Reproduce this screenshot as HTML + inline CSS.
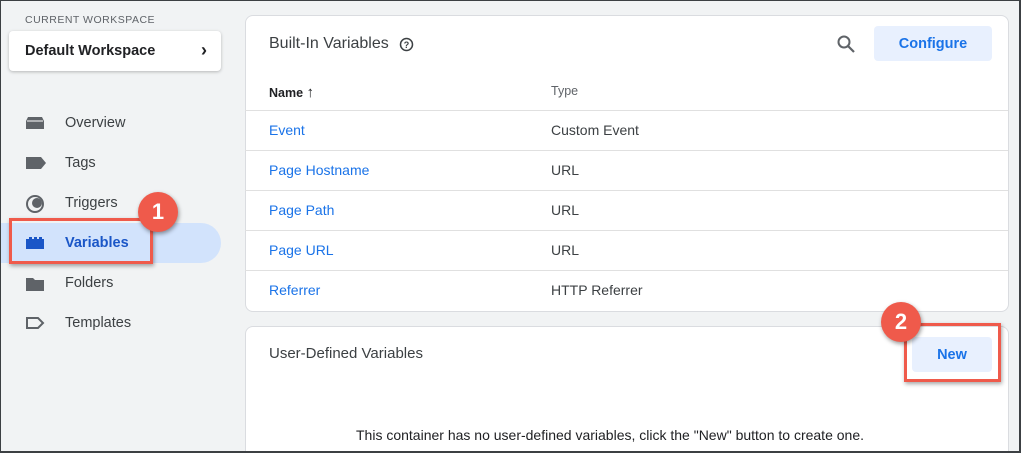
<!DOCTYPE html>
<html style="width:1021px;height:453px;overflow:hidden"><head><meta charset="utf-8"><style>
*{box-sizing:border-box;margin:0;padding:0}
body{width:1021px;height:453px;overflow:hidden;background:#f1f3f4;font-family:"Liberation Sans",Arial,sans-serif;position:relative;color:#202124}
.frame{position:absolute;left:0;top:0;width:1021px;height:453px;border:1px solid #3c4043;border-right-width:2px;border-bottom-width:2px;pointer-events:none;z-index:20}
.abs{position:absolute}
.ws{left:9px;top:31px;width:212px;height:40px;background:#fff;border-radius:4px;box-shadow:0 1px 3px rgba(0,0,0,.25);font-size:14.5px;font-weight:bold;padding:12px 16px}
.nav{left:65px;font-size:14.5px;color:#3c4043}
.card{background:#fff;border:1px solid #dadce0;border-radius:8px}
.row{position:absolute;left:245px;width:763px;height:40px;border-top:1px solid #e0e0e0;font-size:14px}
.row .n{position:absolute;left:24px;top:11px;color:#1a73e8}
.row .t{position:absolute;left:306px;top:11px;color:#3c4043}
.btn{background:#e8f0fe;color:#1a73e8;border-radius:4px;font-size:14.5px;font-weight:bold;text-align:center}
.badge{width:40px;height:40px;border-radius:50%;background:#ef5a4b;color:#fff;font-size:22px;font-weight:bold;text-align:center;line-height:40px;box-shadow:1px 2px 4px rgba(0,0,0,.4);z-index:10}
.red{border:3px solid #ef5a4b;box-shadow:1px 2px 4px rgba(0,0,0,.35);z-index:9}
</style></head><body>
<div class="abs" style="left:25px;top:14px;font-size:10.5px;letter-spacing:.5px;color:#5f6368">CURRENT WORKSPACE</div>
<div class="abs ws">Default Workspace<span style="position:absolute;right:14px;top:9px;font-size:18px">›</span></div>

<svg class="abs" style="left:25px;top:115px" width="20" height="16"><path d="M3 2h14l2 4v8H1V6z" fill="#5f6368"/><path d="M2 6h16" stroke="#fff" stroke-width="1"/></svg>
<div class="abs nav" style="top:115px">Overview</div>
<svg class="abs" style="left:25px;top:156px" width="22" height="14"><path d="M1 1h15l5 6-5 6H1z" fill="#5f6368"/></svg>
<div class="abs nav" style="top:155px">Tags</div>
<svg class="abs" style="left:25px;top:194px" width="20" height="20"><circle cx="10" cy="10" r="8" fill="none" stroke="#5f6368" stroke-width="2"/><circle cx="12" cy="9" r="5" fill="#5f6368"/></svg>
<div class="abs nav" style="top:195px">Triggers</div>
<div class="abs" style="left:0;top:223px;width:221px;height:40px;background:#d2e3fc;border-radius:0 20px 20px 0"></div>
<svg class="abs" style="left:25px;top:236px" width="20" height="14"><path d="M1 3h3V1h3v2h2V1h3v2h2V1h3v2h2v10H1z" fill="#1a56c7"/></svg>
<div class="abs nav" style="top:235px;color:#1a56c7;font-weight:bold">Variables</div>
<div class="abs red" style="left:9px;top:218px;width:144px;height:46px"></div>
<div class="abs badge" style="left:138px;top:192px">1</div>
<svg class="abs" style="left:25px;top:276px" width="20" height="16"><path d="M1 2h7l2 2h9v11H1z" fill="#5f6368"/></svg>
<div class="abs nav" style="top:275px">Folders</div>
<svg class="abs" style="left:25px;top:316px" width="20" height="14"><path d="M2 2h11l5 5-5 5H2z" fill="none" stroke="#5f6368" stroke-width="2"/></svg>
<div class="abs nav" style="top:315px">Templates</div>

<div class="abs card" style="left:245px;top:15px;width:764px;height:297px"></div>
<div class="abs" style="left:269px;top:35px;font-size:16px;color:#3c4043">Built-In Variables</div>
<svg class="abs" style="left:399px;top:37px" width="15" height="15"><circle cx="7.5" cy="7.5" r="6" fill="none" stroke="#3c4043" stroke-width="1.5"/><text x="7.5" y="11" font-size="9" text-anchor="middle" fill="#3c4043" font-family="Liberation Sans" font-weight="bold">?</text></svg>
<svg class="abs" style="left:836px;top:34px" width="22" height="22"><circle cx="8" cy="8" r="5.5" fill="none" stroke="#5f6368" stroke-width="2"/><path d="M12 12l6 6" stroke="#5f6368" stroke-width="2.2"/></svg>
<div class="abs btn" style="left:874px;top:26px;width:118px;height:35px;line-height:36px">Configure</div>
<div class="abs" style="left:269px;top:84px;font-size:12.5px;font-weight:bold">Name <span style="font-size:15px;font-weight:normal">↑</span></div>
<div class="abs" style="left:551px;top:84px;font-size:12.5px;color:#5f6368">Type</div>
<div class="row" style="top:110px"><span class="n">Event</span><span class="t">Custom Event</span></div>
<div class="row" style="top:150px"><span class="n">Page Hostname</span><span class="t">URL</span></div>
<div class="row" style="top:190px"><span class="n">Page Path</span><span class="t">URL</span></div>
<div class="row" style="top:230px"><span class="n">Page URL</span><span class="t">URL</span></div>
<div class="row" style="top:270px"><span class="n">Referrer</span><span class="t">HTTP Referrer</span></div>

<div class="abs card" style="left:245px;top:326px;width:764px;height:125px;border-bottom:none;border-radius:8px 8px 0 0"></div>
<div class="abs" style="left:269px;top:345px;font-size:15px;color:#3c4043">User-Defined Variables</div>
<div class="abs btn" style="left:912px;top:337px;width:80px;height:35px;line-height:36px">New</div>
<div class="abs red" style="left:904px;top:323px;width:97px;height:59px"></div>
<div class="abs badge" style="left:881px;top:302px">2</div>
<div class="abs" style="left:356px;top:427px;font-size:14px;color:#202124">This container has no user-defined variables, click the "New" button to create one.</div>
<div class="frame"></div>
</body></html>
